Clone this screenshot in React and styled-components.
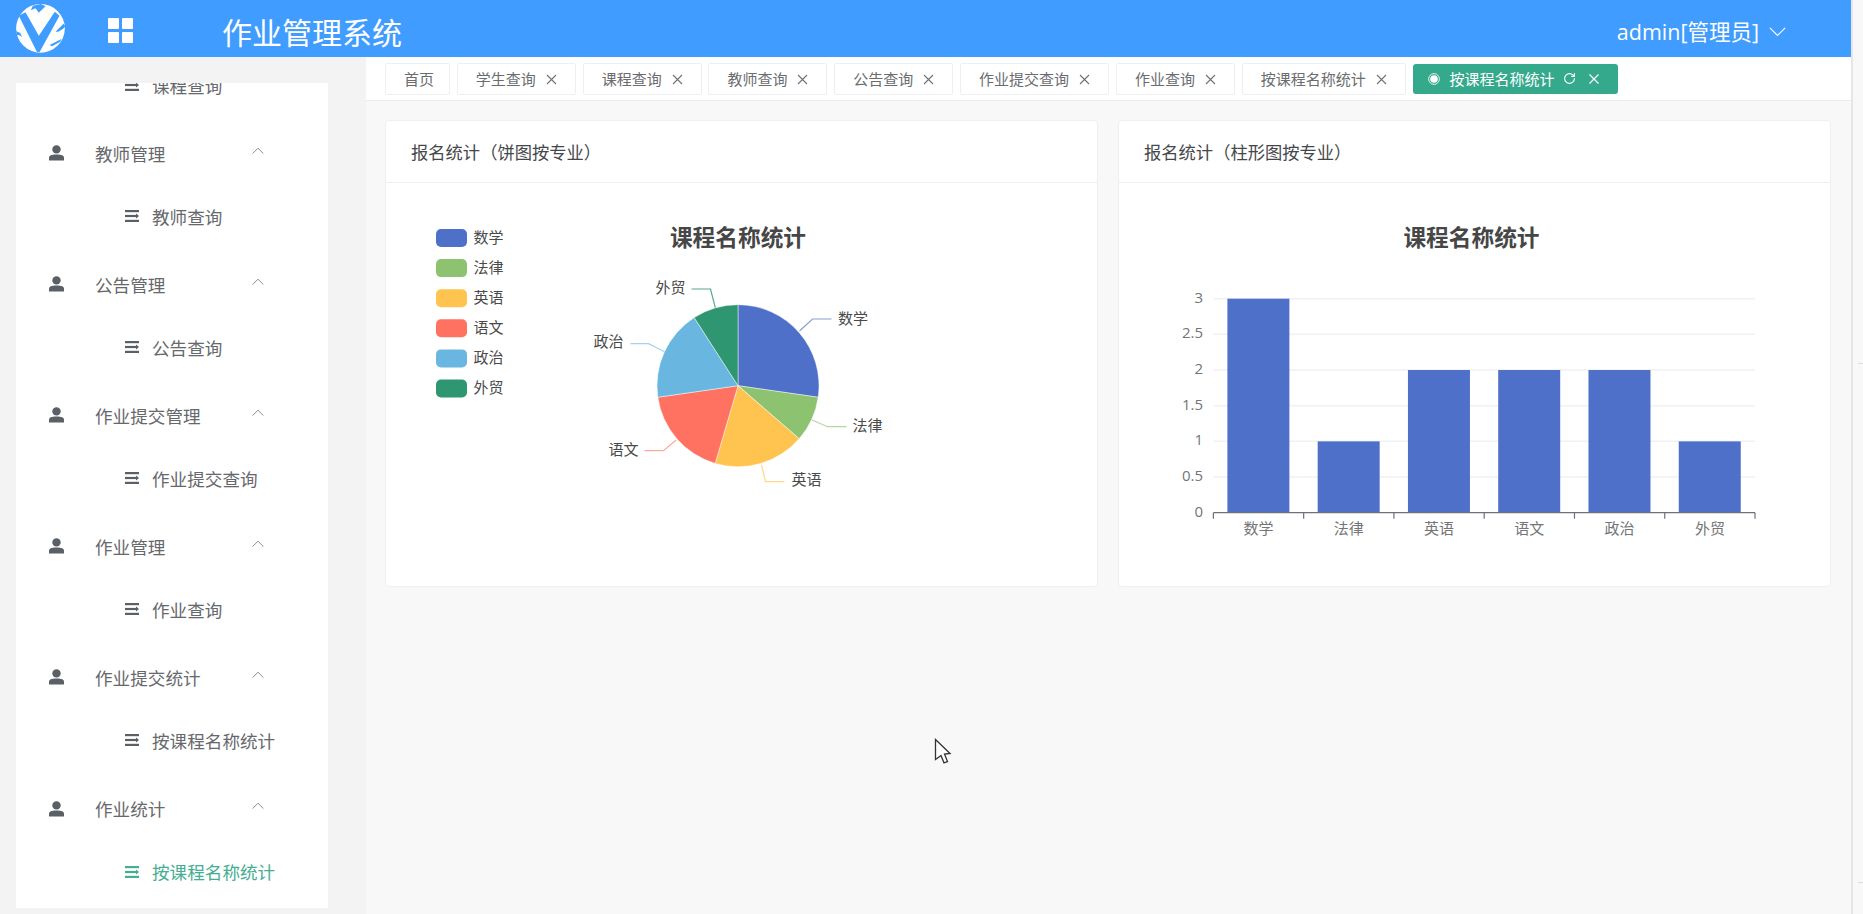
import React from 'react';
import styled, { createGlobalStyle } from 'styled-components';
import { RotateCw } from 'lucide-react';

const GlobalStyle = createGlobalStyle`
  html, body { margin: 0; padding: 0; height: 100%; overflow: hidden; }
  body { font-family: 'Open Sans', 'Noto Sans CJK SC', sans-serif; background: #f8f8f8; }
  * { box-sizing: border-box; }
`;

const Shell = styled.div`
  position: relative;
  display: flex;
  width: 1863px;
  height: 914px;
  overflow: hidden;
`;
const Page = styled.div`
  display: flex;
  flex-direction: column;
  width: 1851px;
`;
const ScrollGutter = styled.div`
  position: relative;
  flex: 1;
  background: #f8f8f8;
  border-left: 2px solid #e6e6e6;
`;
const ScrollTick = styled.span`
  position: absolute;
  right: 0;
  top: ${(p) => p.$top}px;
  width: 5px;
  height: 1px;
  background: #dddddd;
`;

const Header = styled.header`
  display: flex;
  align-items: center;
  height: 57px;
  padding: 0 65px 0 16px;
  background: #409cff;
  color: #fff;
`;
const GridBtn = styled.div`
  display: grid;
  grid-template-columns: 11px 11px;
  gap: 3px;
  margin: 4px 0 0 43px;
  span { height: 11px; background: #fff; border-radius: 1px; }
`;
const SiteTitle = styled.h1`
  margin: 8px 0 0 89px;
  font-size: 30px;
  font-weight: 400;
  line-height: 40px;
`;
const UserMenu = styled.div`
  display: flex;
  align-items: center;
  gap: 10px;
  margin: 7px 0 0 auto;
  font-size: 21.5px;
  line-height: 30px;
`;

const Body = styled.div`
  display: flex;
  flex: 1;
  min-height: 0;
`;
const Sidebar = styled.aside`
  flex: none;
  width: 366px;
  padding: 26px 38px 6px 16px;
  background: #f3f3f3;
`;
const MenuPanel = styled.nav`
  height: 100%;
  overflow: hidden;
  background: #fff;
`;
const MenuList = styled.div`
  display: flex;
  flex-direction: column;
  gap: 7.1px;
  margin-top: -29px;
`;
const MenuGroup = styled.div``;
const GroupRow = styled.div`
  display: flex;
  align-items: center;
  height: 60px;
  margin-bottom: 2px;
  padding-left: 33px;
  font-size: 17.6px;
  color: #66686c;
`;
const GroupLabel = styled.span`
  width: 157px;
  margin-left: 31px;
`;
const GroupArrow = styled.span`
  display: flex;
  margin-top: -5px;
`;
const SubRow = styled.div`
  display: flex;
  align-items: center;
  gap: 13px;
  height: 62px;
  padding-left: 108px;
  font-size: 17.6px;
  color: ${(p) => (p.$active ? '#45ad92' : '#66686c')};
`;

const Content = styled.main`
  display: flex;
  flex: 1;
  flex-direction: column;
  min-width: 0;
  background: #f8f8f8;
`;
const TagBar = styled.div`
  display: flex;
  align-items: center;
  gap: 6.8px;
  height: 44px;
  padding-left: 19px;
  background: #fff;
  border-bottom: 1px solid #ececec;
`;
const Tag = styled.div`
  display: flex;
  align-items: center;
  height: 32px;
  padding: 0 15px 0 18px;
  border: 1px solid #eeeff2;
  border-radius: 2px;
  font-size: 15px;
  color: #6a6c70;
  background: #fff;
  white-space: nowrap;
`;
const TagClose = styled.svg`
  width: 11px;
  height: 11px;
  margin: 1px 3px 0 10px;
  stroke: #6f7175;
  stroke-width: 1.1;
  fill: none;
`;
const ActiveTag = styled.div`
  display: flex;
  align-items: center;
  height: 30px;
  padding: 0 19px 0 15px;
  border-radius: 3px;
  font-size: 15px;
  color: #fff;
  background: #35a98c;
  white-space: nowrap;
`;
const TagDot = styled.svg`
  width: 12px;
  height: 12px;
  margin-right: 10px;
`;
const ActiveClose = styled.svg`
  width: 10px;
  height: 10px;
  margin-left: 13px;
  stroke: #fff;
  stroke-width: 1.2;
  fill: none;
`;

const Cards = styled.div`
  display: grid;
  grid-template-columns: 713px 713px;
  gap: 20px;
  padding: 19px 0 0 19px;
`;
const Card = styled.section`
  height: 467px;
  background: #fff;
  border: 1px solid #eeeff3;
  border-radius: 4px;
`;
const CardHead = styled.div`
  display: flex;
  align-items: center;
  height: 62px;
  padding-left: 25px;
  border-bottom: 1px solid #eeeff3;
  font-size: 17.3px;
  color: #45474b;
`;
const ChartSvg = styled.svg`
  display: block;
  width: 711px;
  height: 403px;
`;
const ChartTitle = styled.text`
  font-size: 22.7px;
  font-weight: 700;
  fill: #464646;
  text-anchor: middle;
  dominant-baseline: central;
`;
const LegendText = styled.text`
  font-size: 15px;
  fill: #4a4a4a;
  dominant-baseline: central;
`;
const AxisText = styled.text`
  font-size: 15px;
  fill: #737578;
  text-anchor: ${(p) => p.$anchor || 'middle'};
  dominant-baseline: central;
`;
const Cursor = styled.svg`
  position: absolute;
  left: 934px;
  top: 738px;
  width: 18px;
  height: 26px;
`;

const BLUE = '#4f70c9';
const courses = [
  { name: '数学', value: 3, color: BLUE, line: '811,319 830,319', from: '798,331', text: [836.5, 318], lineColor: '#8a9fd8' },
  { name: '法律', value: 1, color: '#8dc270', line: '826,426.7 845,426.7', from: '810.6,420', text: [851, 425], lineColor: '#b3d6a0' },
  { name: '英语', value: 2, color: '#ffc44f', line: '764,481.7 783,481.7', from: '760,465', text: [790, 479], lineColor: '#ffd888' },
  { name: '语文', value: 2, color: '#ff7261', line: '662,450.7 643,450.7', from: '674.6,440', text: [607, 449], lineColor: '#ffa89e' },
  { name: '政治', value: 2, color: '#69b7e0', line: '647,343.7 629,343.7', from: '663,351.7', text: [592, 341], lineColor: '#a5d3eb' },
  { name: '外贸', value: 1, color: '#2f9672', line: '709,289 690,289', from: '713.8,307.7', text: [654, 287], lineColor: '#55a98c' },
];

const menu = [
  { name: '教师管理', sub: '教师查询' },
  { name: '公告管理', sub: '公告查询' },
  { name: '作业提交管理', sub: '作业提交查询' },
  { name: '作业管理', sub: '作业查询' },
  { name: '作业提交统计', sub: '按课程名称统计' },
  { name: '作业统计', sub: '按课程名称统计', active: true },
];

const tags = ['学生查询', '课程查询', '教师查询', '公告查询', '作业提交查询', '作业查询', '按课程名称统计'];

const Logo = () => (
  <svg width="49" height="49" viewBox="22 5 146 147" style={{ flex: 'none' }}>
    <circle cx="95" cy="78" r="73" fill="#fff" />
    <path fill="#409cff" d="M30 40 L50 30 L90 100 L138 28 L152 40 L92 150 L84 148 Z" />
    <path fill="#409cff" d="M66 24 L80 18 L90 31 L110 12 L96 5 L72 10 Z" />
    <path fill="#409cff" d="M140 88 L164 64 L170 72 L162 80 L148 88 Z" />
    <path fill="#409cff" d="M122 128 L158 110 L154 118 L130 132 Z" />
    <path fill="#409cff" d="M22 86 L34 92 L40 104 L30 98 L24 98 Z" />
  </svg>
);

const PersonIcon = () => (
  <svg width="15" height="16" viewBox="0 0 15 16" style={{ flex: 'none' }}>
    <circle cx="7.5" cy="4.4" r="4.2" fill="#5b5f66" />
    <path d="M0 15.5 V12.6 C0 10.4 2.4 9.4 7.5 9.4 C12.6 9.4 15 10.4 15 12.6 V15.5 Z" fill="#5b5f66" />
  </svg>
);

const SubIcon = ({ color }) => (
  <svg width="14" height="12" viewBox="0 0 14 12" fill={color} style={{ flex: 'none', marginLeft: 1 }}>
    <rect x="0" y="0" width="14" height="2.2" />
    <rect x="0" y="4.9" width="11" height="2.2" />
    <path d="M11 3.6 L14 6 L11 8.4 Z" />
    <rect x="0" y="9.8" width="14" height="2.2" />
  </svg>
);

const Chevron = ({ up, size, color, width = 1 }) => (
  <svg width={size} height={size * 0.6} viewBox="0 0 20 12" fill="none" stroke={color} strokeWidth={width * 20 / size} style={{ flex: 'none' }}>
    <path d={up ? 'M1 11 L10 2 L19 11' : 'M1 1 L10 10 L19 1'} />
  </svg>
);

const polar = (cx, cy, r, turn) => [cx + r * Math.sin(turn * 2 * Math.PI), cy - r * Math.cos(turn * 2 * Math.PI)];

const PieChart = () => {
  const total = courses.reduce((sum, c) => sum + c.value, 0);
  let acc = 0;
  return (
    <ChartSvg viewBox="386 183 711 403">
      <ChartTitle x="738" y="237">课程名称统计</ChartTitle>
      {courses.map((c, i) => (
        <g key={c.name}>
          <rect x="436" y={229 + i * 30.1} width="31" height="18" rx="5" fill={c.color} />
          <LegendText x="473.5" y={236.8 + i * 30.1}>{c.name}</LegendText>
        </g>
      ))}
      <g transform="translate(1.5 0)">
        {courses.map((c) => {
          const [x1, y1] = polar(736.5, 385.7, 81, acc / total);
          acc += c.value;
          const [x2, y2] = polar(736.5, 385.7, 81, acc / total);
          const large = c.value / total > 0.5 ? 1 : 0;
          return (
            <path
              key={c.name}
              d={`M736.5 385.7 L${x1} ${y1} A81 81 0 ${large} 1 ${x2} ${y2} Z`}
              fill={c.color}
              stroke="#fff"
              strokeOpacity="0.45"
              strokeWidth="1"
            />
          );
        })}
        {courses.map((c) => (
          <g key={c.name}>
            <polyline points={`${c.from} ${c.line}`} fill="none" stroke={c.lineColor} strokeWidth="1.2" />
            <LegendText x={c.text[0]} y={c.text[1]}>{c.name}</LegendText>
          </g>
        ))}
      </g>
    </ChartSvg>
  );
};

const BarChart = () => {
  const x0 = 1213.4;
  const step = 90.27;
  const y0 = 512.7;
  const unit = 71.34;
  return (
    <ChartSvg viewBox="1119 183 711 403">
      <ChartTitle x="1471.5" y="237">课程名称统计</ChartTitle>
      {[0.5, 1, 1.5, 2, 2.5, 3].map((v) => (
        <line key={v} x1={x0} x2={x0 + step * 6} y1={y0 - v * unit} y2={y0 - v * unit} stroke="#eff1f5" strokeWidth="1.5" />
      ))}
      {[0, 0.5, 1, 1.5, 2, 2.5, 3].map((v) => (
        <AxisText key={v} $anchor="end" x="1203" y={y0 - v * unit - 2}>{v}</AxisText>
      ))}
      {courses.map((c, i) => (
        <rect key={c.name} x={x0 + i * step + 14} y={y0 - c.value * unit} width="62" height={c.value * unit} fill={BLUE} />
      ))}
      <line x1={x0} x2={x0 + step * 6} y1={y0} y2={y0} stroke="#6e7079" strokeWidth="1.2" />
      {[0, 1, 2, 3, 4, 5, 6].map((i) => (
        <line key={i} x1={x0 + i * step} x2={x0 + i * step} y1={y0} y2={y0 + 6} stroke="#6e7079" strokeWidth="1.2" />
      ))}
      {courses.map((c, i) => (
        <AxisText key={c.name} x={x0 + (i + 0.5) * step} y="528">{c.name}</AxisText>
      ))}
    </ChartSvg>
  );
};

const App = () => (
  <Shell>
    <GlobalStyle />
    <Page>
      <Header>
        <Logo />
        <GridBtn>
          <span /><span /><span /><span />
        </GridBtn>
        <SiteTitle>作业管理系统</SiteTitle>
        <UserMenu>
          admin[管理员]
          <Chevron size={17} color="#fff" width={1.2} />
        </UserMenu>
      </Header>
      <Body>
        <Sidebar>
          <MenuPanel>
            <MenuList>
              <MenuGroup>
                <SubRow>
                  <SubIcon color="#5b5f66" />
                  课程查询
                </SubRow>
              </MenuGroup>
              {menu.map((m) => (
                <MenuGroup key={m.name}>
                  <GroupRow>
                    <PersonIcon />
                    <GroupLabel>{m.name}</GroupLabel>
                    <GroupArrow>
                      <Chevron up size={12} color="#8a8c90" />
                    </GroupArrow>
                  </GroupRow>
                  <SubRow $active={m.active}>
                    <SubIcon color={m.active ? '#45ad92' : '#5b5f66'} />
                    {m.sub}
                  </SubRow>
                </MenuGroup>
              ))}
            </MenuList>
          </MenuPanel>
        </Sidebar>
        <Content>
          <TagBar>
            <Tag>首页</Tag>
            {tags.map((t) => (
              <Tag key={t}>
                {t}
                <TagClose viewBox="0 0 11 11"><path d="M1 1 L10 10 M10 1 L1 10" /></TagClose>
              </Tag>
            ))}
            <ActiveTag>
              <TagDot viewBox="0 0 12 12">
                <circle cx="6" cy="6" r="5.4" fill="none" stroke="#d9f1ea" strokeWidth="1" />
                <circle cx="6" cy="6" r="3.8" fill="#fff" />
              </TagDot>
              按课程名称统计
              <RotateCw size={13} strokeWidth={2} style={{ marginLeft: 8 }} />
              <ActiveClose viewBox="0 0 10 10"><path d="M0.5 0.5 L9.5 9.5 M9.5 0.5 L0.5 9.5" /></ActiveClose>
            </ActiveTag>
          </TagBar>
          <Cards>
            <Card>
              <CardHead>报名统计（饼图按专业）</CardHead>
              <PieChart />
            </Card>
            <Card>
              <CardHead>报名统计（柱形图按专业）</CardHead>
              <BarChart />
            </Card>
          </Cards>
        </Content>
      </Body>
    </Page>
    <ScrollGutter>
      <ScrollTick $top={363} />
      <ScrollTick $top={882} />
    </ScrollGutter>
    <Cursor viewBox="0 0 18 26">
      <path d="M1.5 1.5 L16 15.5 L10.5 16 L13.5 23.5 L10 24.8 L7 17.5 L1.5 21.5 Z" fill="#fff" stroke="#333" strokeWidth="1.3" />
    </Cursor>
  </Shell>
);

export default App;
